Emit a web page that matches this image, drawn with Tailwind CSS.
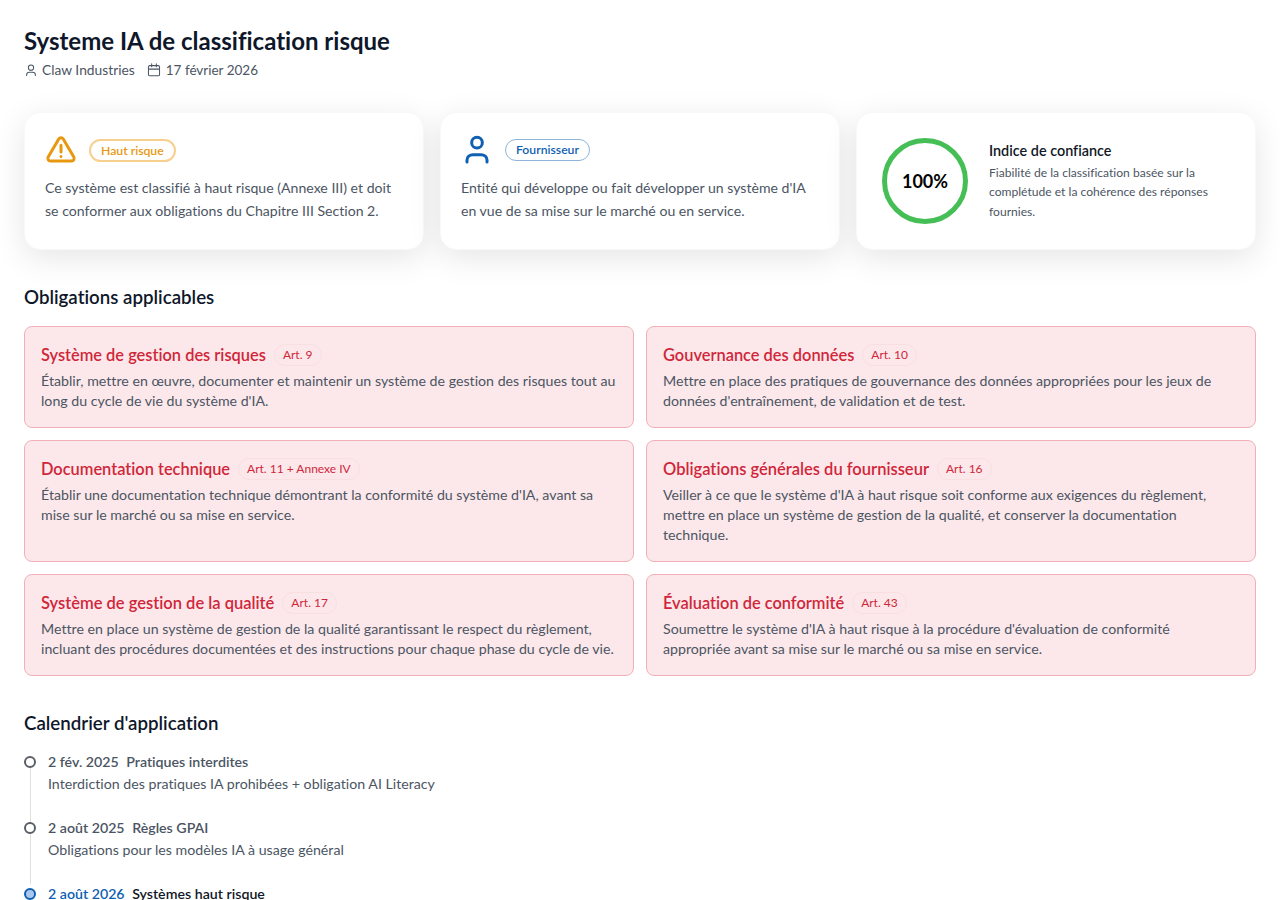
<!DOCTYPE html>
<html lang="fr">
<head>
  <meta charset="UTF-8" />
  <meta name="viewport" content="width=device-width, initial-scale=1" />
  <title>Systeme IA de classification risque</title>
  <script src="https://cdn.jsdelivr.net/npm/@tailwindcss/browser@4"></script>
</head>
<body class="bg-white font-['Lato',sans-serif] [font-variant-ligatures:none] text-[#111827] h-[900px] overflow-hidden">
  <main class="px-6 pt-6">

    <!-- En-tête -->
    <h1 class="text-2xl leading-8 font-bold text-[#0f172a] mt-[1px]">Systeme IA de classification risque</h1>
    <div class="flex items-center gap-3 mt-[3px] text-[13.8px] leading-5 text-[#4b5563]">
      <span class="flex items-center gap-1">
        <svg class="w-3.5 h-3.5" fill="none" stroke="currentColor" stroke-width="1.75" viewBox="0 0 24 24"><circle cx="12" cy="8" r="4.5"/><path stroke-linecap="round" d="M4.500 21.500v-1c0-3 2.500-4.500 5-4.500h5c2.500 0 5 1.500 5 4.500v1"/></svg>
        Claw Industries
      </span>
      <span class="flex items-center gap-[5px]">
        <svg class="w-3.5 h-3.5" fill="none" stroke="currentColor" stroke-width="1.75" viewBox="0 0 24 24"><rect x="2.500" y="4.500" width="19" height="17.500" rx="2.500"/><path stroke-linecap="round" d="M8 1.500v5M16 1.500v5M2.500 10.500h19"/></svg>
        <span class="text-[13.5px]">17 février 2026</span>
      </span>
    </div>

    <!-- Cartes résumé -->
    <section class="grid grid-cols-3 gap-4 mt-[32px]">
      <div class="h-[138px] bg-white rounded-2xl border border-[#f8f8f8] px-5 pt-[21px] shadow-[0_8px_32px_rgba(0,0,0,0.1)]">
        <div class="flex items-center gap-3 h-8">
          <svg class="w-8 h-8 text-[#e8980f] shrink-0" fill="none" stroke="currentColor" stroke-width="2.25" viewBox="0 0 24 24" stroke-linecap="round" stroke-linejoin="round"><path d="M10.300 3.800 2.400 17.300A2 2 0 0 0 4.100 20.300h15.800a2 2 0 0 0 1.700-3L13.700 3.800a2 2 0 0 0-3.400 0Z"/><path d="M12 8.500v5M12 16.800v.1"/></svg>
          <span class="rounded-full border-2 border-[#f7d08f] px-[10px] text-[12.2px] leading-[19px] font-semibold text-[#e8980f]">Haut risque</span>
        </div>
        <p class="mt-[10px] text-[14.1px] leading-[23px] text-[#4b5563]">Ce système est classifié à haut risque (Annexe III) et doit se conformer aux obligations du Chapitre III Section 2.</p>
      </div>

      <div class="h-[138px] bg-white rounded-2xl border border-[#f8f8f8] px-5 pt-[21px] shadow-[0_8px_32px_rgba(0,0,0,0.1)]">
        <div class="flex items-center gap-3 h-8">
          <svg class="w-8 h-8 text-[#0f5fb3] shrink-0" fill="none" stroke="currentColor" stroke-width="2.25" viewBox="0 0 24 24" stroke-linecap="round"><circle cx="12" cy="6.500" r="4"/><path d="M4.500 21v-1.500c0-2.500 2-4 4.500-4h6c2.500 0 4.500 1.500 4.500 4V21"/></svg>
          <span class="rounded-full border border-[#8fb3d9] px-[10px] text-[12.2px] leading-[20px] font-semibold text-[#0f5fb3]">Fournisseur</span>
        </div>
        <p class="mt-[10px] text-[14.1px] leading-[23px] text-[#4b5563]">Entité qui développe ou fait développer un système d'IA en vue de sa mise sur le marché ou en service.</p>
      </div>

      <div class="h-[138px] bg-white rounded-2xl border border-[#f8f8f8] pl-[25px] pr-5 shadow-[0_8px_32px_rgba(0,0,0,0.1)] flex items-center gap-[21px]">
        <div class="w-[86px] h-[86px] rounded-full border-[5px] border-[#45bf55] flex items-center justify-center shrink-0 text-[18px] font-bold text-black">100%</div>
        <div>
          <div class="text-[14.4px] leading-5 font-semibold text-[#111827]">Indice de confiance</div>
          <p class="text-[12.1px] leading-[19.5px] text-[#4b5563] mt-[2px]">Fiabilité de la classification basée sur la complétude et la cohérence des réponses fournies.</p>
        </div>
      </div>
    </section>

    <!-- Obligations -->
    <h2 class="text-[18.7px] leading-6 font-semibold text-[#0f172a] mt-[35px]">Obligations applicables</h2>
    <section class="grid grid-cols-2 gap-3 mt-[17px]">
      <div class="h-[102px] bg-[#fce8ea] border border-[#f2b1ba] rounded-lg px-4 pt-4">
        <div class="flex items-center gap-2 h-6"><h3 class="text-[16.4px] font-semibold text-[#d0263a]">Système de gestion des risques</h3><span class="rounded-full border border-[#f8dfe2] px-2 text-[12px] leading-[20px] text-[#d0263a]">Art. 9</span></div>
        <p class="text-[14.2px] leading-5 text-[#4b5563] mt-1">Établir, mettre en œuvre, documenter et maintenir un système de gestion des risques tout au long du cycle de vie du système d'IA.</p>
      </div>
      <div class="h-[102px] bg-[#fce8ea] border border-[#f2b1ba] rounded-lg px-4 pt-4">
        <div class="flex items-center gap-2 h-6"><h3 class="text-[16.4px] font-semibold text-[#d0263a]">Gouvernance des données</h3><span class="rounded-full border border-[#f8dfe2] px-2 text-[12px] leading-[20px] text-[#d0263a]">Art. 10</span></div>
        <p class="text-[14.2px] leading-5 text-[#4b5563] mt-1">Mettre en place des pratiques de gouvernance des données appropriées pour les jeux de données d'entraînement, de validation et de test.</p>
      </div>
      <div class="h-[122px] bg-[#fce8ea] border border-[#f2b1ba] rounded-lg px-4 pt-4">
        <div class="flex items-center gap-2 h-6"><h3 class="text-[16.4px] font-semibold text-[#d0263a]">Documentation technique</h3><span class="rounded-full border border-[#f8dfe2] px-2 text-[12px] leading-[20px] text-[#d0263a]">Art. 11 + Annexe IV</span></div>
        <p class="text-[14.2px] leading-5 text-[#4b5563] mt-1">Établir une documentation technique démontrant la conformité du système d'IA, avant sa mise sur le marché ou sa mise en service.</p>
      </div>
      <div class="h-[122px] bg-[#fce8ea] border border-[#f2b1ba] rounded-lg px-4 pt-4">
        <div class="flex items-center gap-2 h-6"><h3 class="text-[16.5px] font-semibold text-[#d0263a]">Obligations générales du fournisseur</h3><span class="rounded-full border border-[#f8dfe2] px-2 text-[12px] leading-[20px] text-[#d0263a]">Art. 16</span></div>
        <p class="text-[14.2px] leading-5 text-[#4b5563] mt-1">Veiller à ce que le système d'IA à haut risque soit conforme aux exigences du règlement, mettre en place un système de gestion de la qualité, et conserver la documentation technique.</p>
      </div>
      <div class="h-[102px] bg-[#fce8ea] border border-[#f2b1ba] rounded-lg px-4 pt-4">
        <div class="flex items-center gap-2 h-6"><h3 class="text-[16.5px] font-semibold text-[#d0263a]">Système de gestion de la qualité</h3><span class="rounded-full border border-[#f8dfe2] px-2 text-[12px] leading-[20px] text-[#d0263a]">Art. 17</span></div>
        <p class="text-[14.2px] leading-5 text-[#4b5563] mt-1">Mettre en place un système de gestion de la qualité garantissant le respect du règlement, incluant des procédures documentées et des instructions pour chaque phase du cycle de vie.</p>
      </div>
      <div class="h-[102px] bg-[#fce8ea] border border-[#f2b1ba] rounded-lg px-4 pt-4">
        <div class="flex items-center gap-2 h-6"><h3 class="text-[16.4px] font-semibold text-[#d0263a]">Évaluation de conformité</h3><span class="rounded-full border border-[#f8dfe2] px-2 text-[12px] leading-[20px] text-[#d0263a]">Art. 43</span></div>
        <p class="text-[14.2px] leading-5 text-[#4b5563] mt-1 pr-10">Soumettre le système d'IA à haut risque à la procédure d'évaluation de conformité appropriée avant sa mise sur le marché ou sa mise en service.</p>
      </div>
    </section>

    <!-- Calendrier -->
    <h2 class="text-[18.7px] leading-6 font-semibold text-[#0f172a] mt-[35px]">Calendrier d'application</h2>
    <section class="mt-[17px]">
      <div class="relative pl-6 h-[66px]">
        <span class="absolute left-[6px] top-2 bottom-0 w-px bg-[#e0e0e0]"></span>
        <span class="absolute left-0 top-[4px] w-3 h-3 rounded-full border-2 border-[#5a5f66] bg-white"></span>
        <div class="text-[14.2px] leading-5 font-semibold text-[#4b5563]">2 fév. 2025 <span class="ml-1">Pratiques interdites</span></div>
        <p class="text-[14.2px] leading-5 text-[#4b5563] mt-[2px]">Interdiction des pratiques IA prohibées + obligation AI Literacy</p>
      </div>
      <div class="relative pl-6 h-[66px]">
        <span class="absolute left-[6px] top-0 bottom-0 w-px bg-[#e0e0e0]"></span>
        <span class="absolute left-0 top-[4px] w-3 h-3 rounded-full border-2 border-[#5a5f66] bg-white"></span>
        <div class="text-[14.2px] leading-5 font-semibold text-[#4b5563]">2 août 2025 <span class="ml-1">Règles GPAI</span></div>
        <p class="text-[14.2px] leading-5 text-[#4b5563] mt-[2px]">Obligations pour les modèles IA à usage général</p>
      </div>
      <div class="relative pl-6 h-[66px]">
        <span class="absolute left-0 top-[4px] w-3 h-3 rounded-full border-2 border-[#0f5fb3] bg-[#a8c8ee]"></span>
        <div class="text-[14.2px] leading-5 font-semibold text-[#0f5fb3]">2 août 2026 <span class="ml-1 text-[#111827]">Systèmes haut risque</span></div>
      </div>
    </section>
  </main>
</body>
</html>
